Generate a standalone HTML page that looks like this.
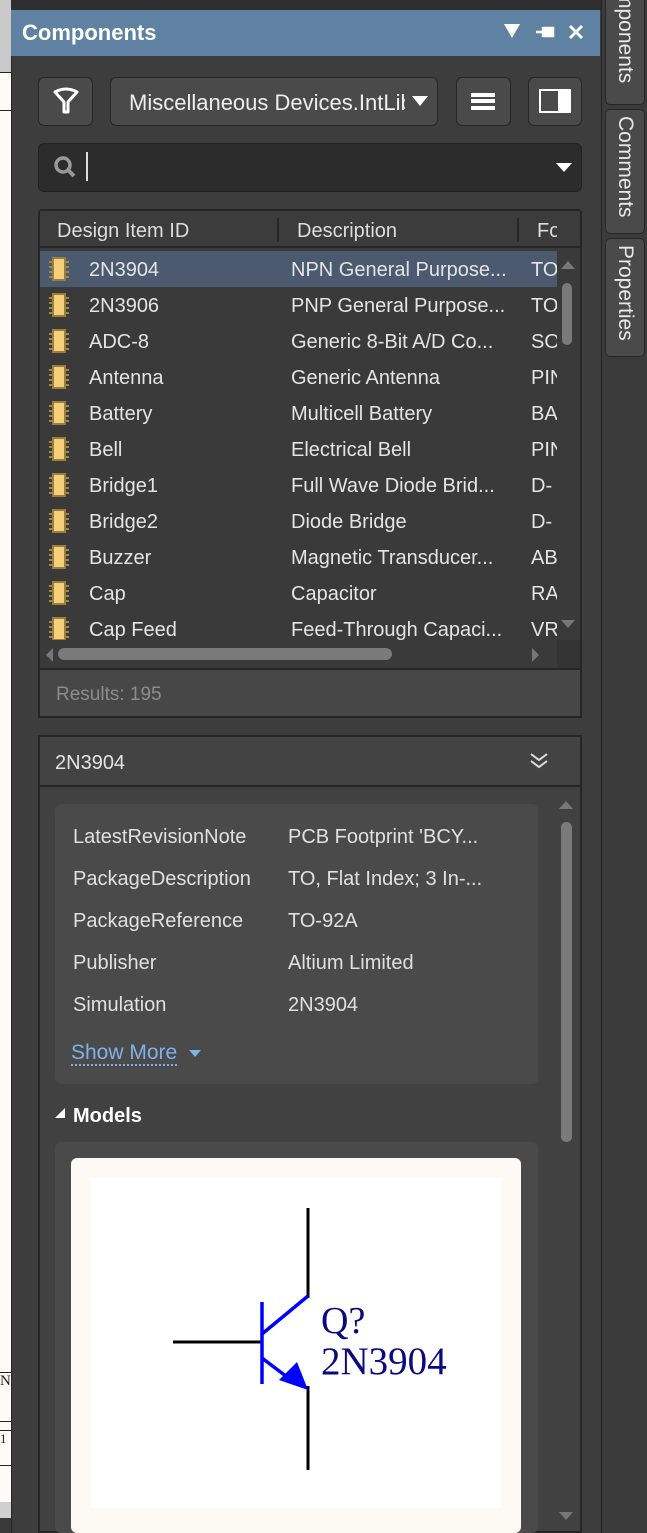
<!DOCTYPE html>
<html><head><meta charset="utf-8"><style>
*{box-sizing:border-box;margin:0;padding:0}
body{width:647px;height:1533px;background:#2f2f2f;position:relative;overflow:hidden;font-family:"Liberation Sans",sans-serif;color:#e4e4e4}
.a{position:absolute}
.btn{position:absolute;background:#4a4a4a;border:1px solid #262626;border-radius:6px}
.row{position:absolute;left:39px;width:518px;height:36px;font-size:20px;line-height:38px}
.row span{position:absolute;white-space:nowrap}
.ic{position:absolute;left:8px;top:6px;width:24px;height:24px}
.tab{position:absolute;left:605px;width:40px;background:#4a4a4a;border:1px solid #262626;border-radius:0 0 5px 5px;writing-mode:vertical-rl;font-size:21px;line-height:38px;color:#e8e8e8;padding-top:6px}
.p{position:absolute;font-size:20px;color:#e0e0e0;white-space:nowrap}
</style></head><body>
<div class="a" style="left:0;top:0;width:11px;height:1533px;background:#fdfbf7"></div>
<div class="a" style="left:0;top:0;width:11px;height:72px;background:#c9c9c9"></div>
<div class="a" style="left:0;top:72px;width:11px;height:1px;background:#222"></div>
<div class="a" style="left:0;top:110px;width:11px;height:1px;background:#222"></div>
<div class="a" style="left:0;top:1372px;width:11px;height:50px;border-top:1px solid #222;border-bottom:1px solid #222;font:15px 'Liberation Serif',serif;color:#222">N</div>
<div class="a" style="left:0;top:1430px;width:11px;height:36px;border-top:1px solid #222;border-bottom:1px solid #222;font:13px 'Liberation Serif',serif;color:#222">1</div>
<div class="a" style="left:0;top:1502px;width:11px;height:16px;background:#d0d0d0"></div>
<div class="a" style="left:0;top:1518px;width:11px;height:15px;background:#3a3a3a"></div>
<div class="a" style="left:11px;top:10px;width:590px;height:1523px;background:#3d3d3d;border-left:1px solid #262626"></div>
<div class="a" style="left:11px;top:10px;width:589px;height:46px;background:#5f82a3"></div>
<div class="a" style="left:22px;top:20px;font-size:22px;font-weight:bold;color:#fff">Components</div>
<div class="a" style="left:504px;top:24px;width:0;height:0;border-left:8px solid transparent;border-right:8px solid transparent;border-top:14px solid #fff"></div>
<svg class="a" style="left:534px;top:24px" width="22" height="16"><path d="M2 8h7M9 3v10M9 4h10v8H9" stroke="#fff" stroke-width="2.5" fill="#fff"/></svg>
<svg class="a" style="left:568px;top:24px" width="16" height="16"><path d="M2 2L14 14M14 2L2 14" stroke="#fff" stroke-width="3"/></svg>
<div class="a" style="left:601px;top:0;width:46px;height:1533px;background:#3b3b3b;border-left:1px solid #222"></div>
<div class="tab" style="top:-10px;height:115px;padding-top:0">mponents</div>
<div class="tab" style="top:109px;height:125px;border-radius:5px">Comments</div>
<div class="tab" style="top:238px;height:119px;border-radius:5px">Properties</div>
<div class="btn" style="left:38px;top:77px;width:55px;height:49px"></div>
<svg class="a" style="left:52px;top:87px" width="28" height="28"><path d="M3 5 Q14 -1 25 5 L16 15 V25 H12 V15 Z" fill="none" stroke="#fff" stroke-width="3" stroke-linejoin="round"/></svg>
<div class="btn" style="left:110px;top:77px;width:328px;height:49px"></div>
<div class="a" style="left:129px;top:90px;font-size:22px;color:#eee;width:276px;overflow:hidden;white-space:nowrap;height:28px">Miscellaneous Devices.IntLib</div>
<div class="a" style="left:412px;top:96px;width:0;height:0;border-left:8px solid transparent;border-right:8px solid transparent;border-top:10px solid #fff"></div>
<div class="btn" style="left:456px;top:77px;width:55px;height:49px"></div>
<div class="a" style="left:471px;top:93px;width:24px;height:17px;border-top:4px solid #fff;border-bottom:4px solid #fff"></div>
<div class="a" style="left:471px;top:99px;width:24px;height:4px;background:#fff"></div>
<div class="btn" style="left:528px;top:77px;width:54px;height:49px"></div>
<div class="a" style="left:539px;top:89px;width:19px;height:24px;border:2px solid #fff;border-right:none"></div>
<div class="a" style="left:558px;top:89px;width:13px;height:24px;background:#fff"></div>
<div class="a" style="left:38px;top:143px;width:544px;height:49px;background:#2c2c2c;border:1px solid #222;border-radius:6px"></div>
<svg class="a" style="left:53px;top:155px" width="24" height="24"><circle cx="10" cy="10" r="7" fill="none" stroke="#999" stroke-width="3.5"/><path d="M15 15L21 21" stroke="#999" stroke-width="4"/></svg>
<div class="a" style="left:86px;top:152px;width:2px;height:29px;background:#ddd"></div>
<div class="a" style="left:556px;top:163px;width:0;height:0;border-left:8px solid transparent;border-right:8px solid transparent;border-top:9px solid #fff"></div>
<div class="a" style="left:38px;top:209px;width:544px;height:509px;background:#3a3a3a;border:2px solid #262626;border-radius:4px 4px 0 0"></div>
<div class="a" style="left:40px;top:211px;width:540px;height:37px;background:#3c3c3c;border-bottom:2px solid #262626"></div>
<div class="a" style="left:57px;top:220px;font-size:20px;color:#ddd">Design Item ID</div>
<div class="a" style="left:277px;top:218px;width:2px;height:24px;background:#262626"></div>
<div class="a" style="left:297px;top:220px;font-size:20px;color:#ddd">Description</div>
<div class="a" style="left:517px;top:218px;width:2px;height:24px;background:#262626"></div>
<div class="a" style="left:537px;top:220px;font-size:20px;color:#ddd;width:20px;overflow:hidden">Fo</div>
<div class="a" style="left:40px;top:251px;width:517px;height:36px;background:#4b5a6e"></div>
<div id="rows"></div>
<script>
var d=[["2N3904","NPN General Purpose...","TO"],["2N3906","PNP General Purpose...","TO"],["ADC-8","Generic 8-Bit A/D Co...","SO"],["Antenna","Generic Antenna","PIN"],["Battery","Multicell Battery","BA"],["Bell","Electrical Bell","PIN"],["Bridge1","Full Wave Diode Brid...","D-"],["Bridge2","Diode Bridge","D-"],["Buzzer","Magnetic Transducer...","AB"],["Cap","Capacitor","RA"],["Cap Feed","Feed-Through Capaci...","VR"]];
var h="";d.forEach(function(r,i){var t=251+i*36;var hh=i==10?(640-t):36;
h+='<div class="row" style="top:'+t+'px;height:'+hh+'px;overflow:hidden"><svg class="ic" viewBox="0 0 24 24"><path d="M2 5h20M2 10h20M2 15h20M2 20h20" stroke="#a08a45" stroke-width="2"/><rect x="6" y="1" width="12" height="22" fill="#f5d07a" stroke="#9a7f3c" stroke-width="2"/></svg><span style="left:50px">'+r[0]+'</span><span style="left:252px">'+r[1]+'</span><span style="left:492px;width:26px;overflow:hidden">'+r[2]+'</span></div>';});
document.getElementById("rows").innerHTML=h;
</script>
<div class="a" style="left:557px;top:251px;width:23px;height:389px;background:#3a3a3a"></div>
<div class="a" style="left:561px;top:261px;width:0;height:0;border-left:7px solid transparent;border-right:7px solid transparent;border-bottom:8px solid #777"></div>
<div class="a" style="left:562px;top:283px;width:10px;height:62px;background:#7a7a7a;border-radius:5px"></div>
<div class="a" style="left:561px;top:620px;width:0;height:0;border-left:7px solid transparent;border-right:7px solid transparent;border-top:8px solid #777"></div>
<div class="a" style="left:40px;top:640px;width:517px;height:28px;background:#3a3a3a"></div>
<div class="a" style="left:557px;top:640px;width:23px;height:28px;background:#333"></div>
<div class="a" style="left:46px;top:648px;width:0;height:0;border-top:7px solid transparent;border-bottom:7px solid transparent;border-right:7px solid #777"></div>
<div class="a" style="left:58px;top:648px;width:334px;height:12px;background:#7a7a7a;border-radius:6px"></div>
<div class="a" style="left:532px;top:648px;width:0;height:0;border-top:7px solid transparent;border-bottom:7px solid transparent;border-left:7px solid #777"></div>
<div class="a" style="left:40px;top:668px;width:540px;height:48px;background:#474747;border-top:2px solid #262626"></div>
<div class="a" style="left:56px;top:684px;font-size:19px;color:#8c8c8c">Results: 195</div>
<div class="a" style="left:38px;top:735px;width:544px;height:798px;background:#414141;border:2px solid #262626"></div>
<div class="a" style="left:40px;top:737px;width:540px;height:50px;background:#434343;border-bottom:2px solid #262626"></div>
<div class="a" style="left:55px;top:752px;font-size:20px;color:#e4e4e4">2N3904</div>
<svg class="a" style="left:528px;top:751px" width="22" height="20"><path d="M3 3l8 6 8-6M3 10l8 6 8-6" fill="none" stroke="#ddd" stroke-width="2"/></svg>
<div class="a" style="left:55px;top:804px;width:483px;height:280px;background:#4a4a4a;border-radius:6px"></div>
<div class="p" style="left:73px;top:826px">LatestRevisionNote</div><div class="p" style="left:288px;top:826px">PCB Footprint 'BCY...</div>
<div class="p" style="left:73px;top:868px">PackageDescription</div><div class="p" style="left:288px;top:868px">TO, Flat Index; 3 In-...</div>
<div class="p" style="left:73px;top:910px">PackageReference</div><div class="p" style="left:288px;top:910px">TO-92A</div>
<div class="p" style="left:73px;top:952px">Publisher</div><div class="p" style="left:288px;top:952px">Altium Limited</div>
<div class="p" style="left:73px;top:994px">Simulation</div><div class="p" style="left:288px;top:994px">2N3904</div>
<div class="p" style="left:71px;top:1042px;color:#7fb2e8;border-bottom:2px dotted #7fb2e8;line-height:22px;font-size:21px">Show More</div>
<div class="a" style="left:189px;top:1050px;width:0;height:0;border-left:6px solid transparent;border-right:6px solid transparent;border-top:7px solid #7fb2e8"></div>
<div class="a" style="left:55px;top:1108px;width:0;height:0;border-left:10px solid transparent;border-bottom:10px solid #fff"></div>
<div class="a" style="left:73px;top:1105px;font-size:20px;font-weight:bold;color:#fff">Models</div>
<div class="a" style="left:55px;top:1142px;width:483px;height:391px;background:#4a4a4a;border-radius:6px"></div>
<div class="a" style="left:71px;top:1158px;width:450px;height:375px;background:#fdfaf3;border-radius:6px"></div>
<div class="a" style="left:91px;top:1178px;width:410px;height:330px;background:#fff"></div>
<svg class="a" style="left:91px;top:1178px" width="410" height="330">
<path d="M217 30V120M217 208V292M82 164H171" stroke="#000" stroke-width="3"/>
<path d="M171 124V206M171 156L217 118M171 180L200 202" stroke="#0000ff" stroke-width="3.5"/>
<path d="M188 202L217 212L206 184Z" fill="#0000ff"/>
<text x="230" y="155" font-family="Liberation Serif,serif" font-size="38" fill="#0a0a80">Q?</text>
<text x="230" y="196" font-family="Liberation Serif,serif" font-size="39" fill="#0a0a80">2N3904</text>
</svg>
<div class="a" style="left:559px;top:801px;width:0;height:0;border-left:7px solid transparent;border-right:7px solid transparent;border-bottom:8px solid #777"></div>
<div class="a" style="left:561px;top:822px;width:11px;height:320px;background:#7a7a7a;border-radius:5px"></div>
<div class="a" style="left:559px;top:1512px;width:0;height:0;border-left:7px solid transparent;border-right:7px solid transparent;border-top:8px solid #777"></div>
</body></html>
